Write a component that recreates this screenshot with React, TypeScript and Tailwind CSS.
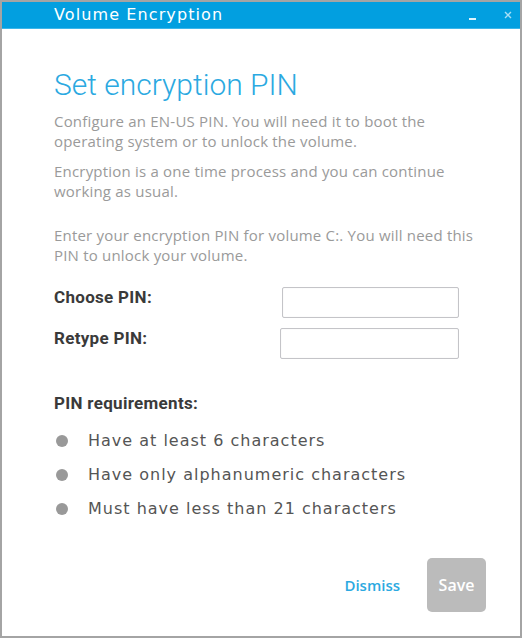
export default function App() {
  const reqs = [
    "Have at least 6 characters",
    "Have only alphanumeric characters",
    "Must have less than 21 characters",
  ];

  return (
    <div className="w-[522px] h-[638px] border-2 border-[#a4a4a4] bg-white flex flex-col overflow-hidden">
      {/* Title bar */}
      <div className="h-[27px] shrink-0 bg-[#029fe0] border-b border-[#3cb6ea] flex items-center pl-[52px] pr-[6px]">
        <span className="text-white text-[16px] font-['DejaVu_Sans',sans-serif] tracking-[1.1px]">
          Volume Encryption
        </span>
        <div className="ml-auto flex items-center gap-[28px] text-[#cfeefa]">
          <span className="block w-[7px] h-[2px] bg-[#dff4fc] mt-[8px]" />
          <svg width="8" height="8" viewBox="0 0 8 8" className="mr-[2px]">
            <path d="M1 1L7 7M7 1L1 7" stroke="#a9dff5" strokeWidth="1.4" />
          </svg>
        </div>
      </div>

      <div className="flex-1 flex flex-col pl-[52px] pr-[40px]">
        <h1 className="mt-[38px] text-[30px] leading-[36px] font-light text-[#2ba9e1] font-['Roboto',sans-serif]">
          Set encryption PIN
        </h1>

        <div className="mt-[8px] w-[425px] text-[15px] tracking-[0.2px] leading-[20px] text-[#9a9a9a] font-['Open_Sans',sans-serif]">
          <p>Configure an EN-US PIN. You will need it to boot the operating system or to unlock the volume.</p>
          <p className="mt-[10px]">Encryption is a one time process and you can continue working as usual.</p>
          <p className="mt-[24px]">Enter your encryption PIN for volume C:. You will need this PIN to unlock your volume.</p>
        </div>

        <div className="mt-[22px] flex flex-col gap-[10px] font-['Roboto',sans-serif]">
          <div className="flex items-center">
            <label className="w-[228px] text-[17px] tracking-[0.3px] font-bold text-[#3a3a3a] -mt-[10px]">Choose PIN:</label>
            <input className="w-[177px] h-[31px] border border-[#c4c4c8] rounded-[2px] shadow-[inset_0_0_1px_#ddd] outline-none" />
          </div>
          <div className="flex items-center">
            <label className="w-[226px] text-[17px] tracking-[0.3px] font-bold text-[#3a3a3a] -mt-[10px]">Retype PIN:</label>
            <input className="w-[179px] h-[31px] border border-[#c4c4c8] rounded-[2px] shadow-[inset_0_0_1px_#ddd] outline-none" />
          </div>
        </div>

        <div className="mt-[32px] text-[17px] tracking-[0.3px] font-bold text-[#3a3a3a] font-['Roboto',sans-serif]">
          PIN requirements:
        </div>

        <ul className="mt-[14px] flex flex-col gap-[14px] font-['DejaVu_Sans',sans-serif] text-[16px] tracking-[1px] text-[#555]">
          {reqs.map((r) => (
            <li key={r} className="flex items-center h-[20px]">
              <span className="w-[12px] h-[12px] rounded-full bg-[#999] shrink-0 ml-[2px]" />
              <span className="ml-[20px]">{r}</span>
            </li>
          ))}
        </ul>

        <div className="mt-auto mb-[24px] flex items-center justify-end gap-[27px] mr-[-6px]">
          <button className="text-[15px] font-semibold text-[#2ba9e1] font-['Open_Sans',sans-serif]">Dismiss</button>
          <button className="w-[59px] h-[54px] rounded-[5px] bg-[#bbbbbb] text-white text-[16px] font-semibold font-['Open_Sans',sans-serif]">
            Save
          </button>
        </div>
      </div>
    </div>
  );
}
